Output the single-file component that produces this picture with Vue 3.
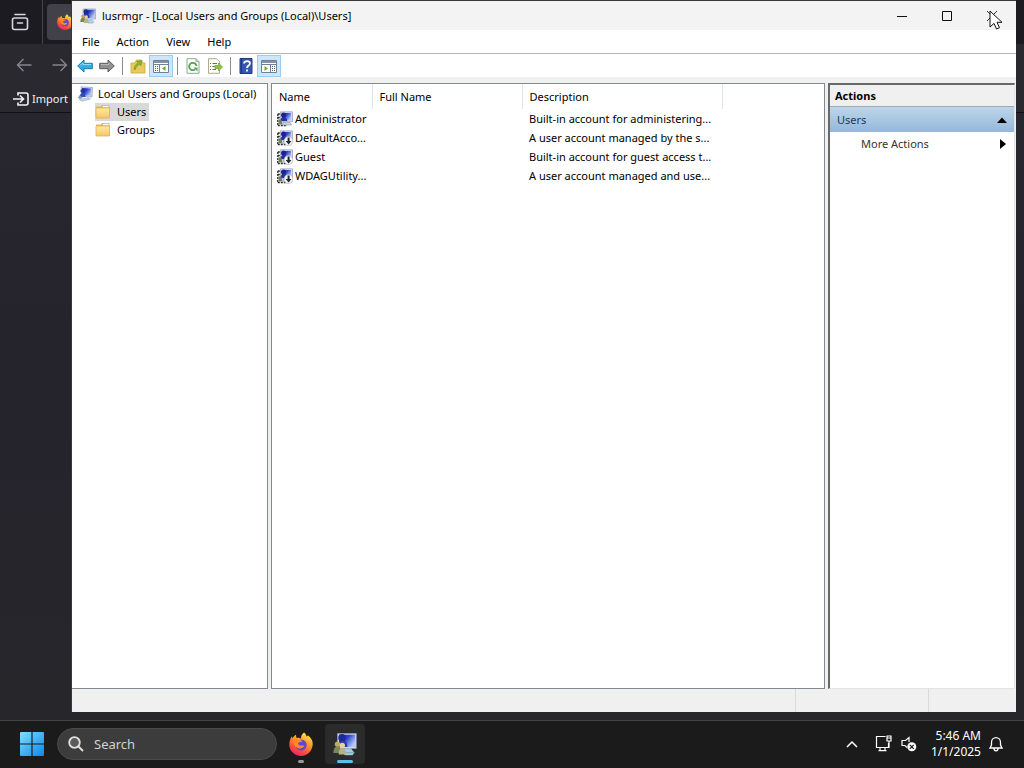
<script setup>
import { ref } from 'vue'

const menus = ['File', 'Action', 'View', 'Help']
const users = [
  { name: 'Administrator', full: '', description: 'Built-in account for administering...', disabled: false },
  { name: 'DefaultAcco...', full: '', description: 'A user account managed by the s...', disabled: true },
  { name: 'Guest', full: '', description: 'Built-in account for guest access t...', disabled: true },
  { name: 'WDAGUtility...', full: '', description: 'A user account managed and use...', disabled: true }
]
const folders = ['Users', 'Groups']
const selected = ref('Users')
const query = ref('')
</script>

<template>
  <svg class="defs" aria-hidden="true">
    <defs>
      <linearGradient id="screenFill" x1="0" y1="0" x2="1" y2="0.6">
        <stop offset="0" stop-color="#1020ae" /><stop offset="0.5" stop-color="#2d45c8" /><stop offset="1" stop-color="#b4c6f4" />
      </linearGradient>
      <linearGradient id="folderFill" x1="0" y1="0" x2="0" y2="1">
        <stop offset="0" stop-color="#ffe9a2" /><stop offset="1" stop-color="#f3c964" />
      </linearGradient>
      <linearGradient id="winFill" x1="0" y1="0" x2="1" y2="1">
        <stop offset="0" stop-color="#7fe0fb" /><stop offset="1" stop-color="#0a86ee" />
      </linearGradient>
      <linearGradient id="foxFill" x1="0.8" y1="0" x2="0.3" y2="1">
        <stop offset="0" stop-color="#fff04a" /><stop offset="0.4" stop-color="#ff9a28" /><stop offset="0.75" stop-color="#ff4a3c" /><stop offset="1" stop-color="#ec1f75" />
      </linearGradient>
      <symbol id="users" viewBox="0 0 16 16">
        <path d="M3 1h12.500v10H3z" fill="#d5d9e4" stroke="#8c94ac" stroke-width=".6" />
        <path d="M4 1.800h10.700v8.200H4z" fill="url(#screenFill)" />
        <path d="M7 11h5l2 2.500H6z" fill="#a9cbd8" />
        <path d="M6 13.500h8.500l-1.500 2H8z" fill="#9cc8d8" />
        <circle cx="6" cy="3.800" r="2.500" fill="#1e2899" />
        <path d="M3.500 10c0-3 1-4.300 2.800-4.300S9.500 7 9.500 10z" fill="#2437b7" />
        <circle cx="3" cy="8.200" r="1.800" fill="#bfa765" />
        <circle cx="6.200" cy="9" r="1.800" fill="#ead092" />
        <path d="M.3 14c0-3 1-4.300 2.600-4.300S5.500 11 5.500 14z" fill="#7c8652" />
        <path d="M3.800 15c0-3 1-4.300 2.500-4.300S8.700 12 8.700 15z" fill="#b5b486" />
      </symbol>
      <symbol id="root" viewBox="0 0 16 16">
        <path d="M4 .8l11.500.7-.5 9.500-10-.5z" fill="#d7ddec" stroke="#8591b4" stroke-width=".6" />
        <path d="M5 2l9.300.5-.4 7.300-8.200-.4z" fill="url(#screenFill)" />
        <circle cx="5.500" cy="5" r="2.100" fill="#2a329c" />
        <path d="M2.800 11c0-2.600 1-4 2.700-4s3 1.400 3 4z" fill="#2c4bc0" />
        <path d="M.8 12l2-3 3 2.500-2.500 1.500z" fill="#8b93a5" />
        <path d="M2 13.500l9-1.800 2.500 1.300-8.500 2.300z" fill="#bcd5e6" stroke="#8aa8be" stroke-width=".5" />
      </symbol>
      <symbol id="account" viewBox="0 0 16 16">
        <path d="M3.500.8h12v10h-12z" fill="#d5daf0" stroke="#858ca8" stroke-width=".6" />
        <path d="M5 2h9v7.300H5z" fill="url(#screenFill)" />
        <circle cx="6.500" cy="4" r="2.500" fill="#20218e" />
        <path d="M3.500 10c0-2.500 1.300-4 3.200-4s3.500 1.500 3.500 4z" fill="#2230a5" />
        <path d="M.8 3h2M.8 3v11.500M.8 6.500h2.700M.8 14.500H10" fill="none" stroke="#24272d" stroke-width="1.300" stroke-dasharray="2 1" />
        <path d="M1.500 8l3 1 1 4.500h-4z" fill="#72805e" />
        <path d="M6 11.500h7l1.500 2.500H5.500z" fill="#cad6dc" stroke="#8798a3" stroke-width=".6" />
      </symbol>
      <symbol id="folder" viewBox="0 0 16 16">
        <path d="M1 2.500h5l1-1.500h7.500v13H1z" fill="#e5b752" />
        <path d="M8 1.800h5.500v1.500H8z" fill="#fff" />
        <path d="M1 4h13.500v10H1z" fill="url(#folderFill)" stroke="#dcae4b" stroke-width=".7" />
      </symbol>
      <symbol id="firefox" viewBox="0 0 24 24">
        <path d="M15 .5c2 1.500 2.300 3 2.500 4 1-.3 1.300-.8 1.400-1.300C22.500 6 24 9 23.700 12.500 23.300 19 18.400 24 12 24S.3 18.800.3 12.500C.3 9 1.500 6 3 4.200c0 1 .2 1.600.5 2.100C4.500 4.500 6 3.200 7 2.700c-.2 1.500.3 2.500 1 3.300 1.800-.4 3.200.1 4 .8-.3-2.600 1-5 3-6.300z" fill="url(#foxFill)" />
        <circle cx="12.200" cy="13" r="5.500" fill="#6b45c9" />
        <path d="M3.700 8.800c2-1.600 4.500-1.700 6-.7 1.400-.2 2.900.2 3.600 1.400l-3.600 1c-.8.700-.7 1.700.1 2.500 1.900 1.200 3.800.2 5.500.7-1.300 2.600-4.500 3.500-7.200 2C5.500 14.200 4.800 11.500 3.700 8.800z" fill="#ff8b22" />
      </symbol>
    </defs>
  </svg>

  <div class="screen">
    <main class="desktop">
      <section class="browser" aria-label="Browser">
        <div class="tabs">
          <button class="recent" aria-label="Recent browsing">
            <svg width="18" height="18" viewBox="0 0 18 18" fill="none" stroke="#d8d7df" stroke-width="1.600" stroke-linecap="round"><path d="M4 1.500h10M3.500 5h11q2 0 2 2v7.500q0 2-2 2h-11q-2 0-2-2V7q0-2 2-2zM6.500 10h5" /></svg>
          </button>
          <div class="tab"><svg width="16" height="16"><use href="#firefox" /></svg></div>
        </div>
        <div class="nav">
          <button aria-label="Back"><svg width="16" height="16" viewBox="0 0 16 16" fill="none" stroke="#85848d" stroke-width="1.400"><path d="M15.500 8H1.500M7.500 2l-6 6 6 6" /></svg></button>
          <button aria-label="Forward"><svg width="16" height="16" viewBox="0 0 16 16" fill="none" stroke="#85848d" stroke-width="1.400"><path d="M.5 8h14M8.500 2l6 6-6 6" /></svg></button>
        </div>
        <div class="bookmarks">
          <button class="import"><svg width="16" height="14" viewBox="0 0 16 14" fill="none" stroke="#f2f2f5" stroke-width="1.600"><path d="M0 7h10M7 3.500L10.500 7 7 10.500M5 3.500V1h8q2 0 2 2v8q0 2-2 2H5v-2.500" /></svg>Import</button>
        </div>
      </section>

      <section class="window" aria-label="lusrmgr">
        <header class="title">
          <svg width="16" height="16"><use href="#users" /></svg>
          <h1>lusrmgr - [Local Users and Groups (Local)\Users]</h1>
          <div class="controls">
            <button aria-label="Minimize"><svg width="12" height="12" viewBox="0 0 12 12"><path d="M1 6.500h10" stroke="#111" /></svg></button>
            <button aria-label="Maximize"><svg width="12" height="12" viewBox="0 0 12 12"><path d="M1.500 1.500h9v9h-9z" stroke="#111" fill="none" /></svg></button>
            <button aria-label="Close"><svg width="12" height="12" viewBox="0 0 12 12"><path d="M1 1l10 10M11 1L1 11" stroke="#333" /></svg></button>
          </div>
        </header>

        <nav class="menu"><button v-for="m in menus" :key="m">{{ m }}</button></nav>

        <div class="tools" role="toolbar" aria-label="Tools">
          <button aria-label="Back"><svg width="16" height="16" viewBox="0 0 16 16"><path d="M.7 8L7 2v3.300h8.300v5.400H7V14z" fill="#35aee6" stroke="#197cad" /><path d="M3 7.500L6 5v1.500h8" stroke="#97dcf7" fill="none" /></svg></button>
          <button aria-label="Forward"><svg width="16" height="16" viewBox="0 0 16 16"><path d="M15.300 8L9 2v3.300H.7v5.400H9V14z" fill="#929292" stroke="#5c5c5c" /><path d="M2 6.500h8V5" stroke="#bbb" fill="none" /></svg></button>
          <i class="bar"></i>
          <button aria-label="Up one level"><svg width="16" height="16" viewBox="0 0 16 16"><path d="M1 5h4l1.500-3h5l1 3H15v10H1z" fill="#ebca5d" stroke="#c8a740" stroke-width=".8" /><path d="M4 11.500C4 8.500 5.500 6.500 8 5L6.500 3.500 12 2.500l-1 5.200L9.500 6.300C7.500 7.500 6 9 5.500 11.500z" fill="#86b52c" stroke="#628c1c" stroke-width=".5" /></svg></button>
          <button class="on" aria-label="Show or hide console tree"><svg width="18" height="16" viewBox="0 0 18 16"><path d="M1.500 2.500h15v12h-15z" fill="#fff" stroke="#718195" /><path d="M2 3h14v2H2z" fill="#8293aa" /><path d="M2 6.500h14M7.500 7v7" stroke="#718195" /><path d="M3 8.500h3M3 10.500h3M3 12.500h3" stroke="#45536a" stroke-dasharray="1 1" /><path d="M13.500 8v5L10 10.500z" fill="#72a837" /></svg></button>
          <i class="bar"></i>
          <button aria-label="Refresh"><svg width="16" height="16" viewBox="0 0 16 16"><path d="M2 .7h9l3 3v11.600H2z" fill="#fff" stroke="#98a29b" /><path d="M11 .7v3h3" fill="none" stroke="#98a29b" /><path d="M11.500 8A3.700 3.700 0 1 0 10 11.500" fill="none" stroke="#50a648" stroke-width="1.800" /><path d="M8.500 9.500h4v4z" fill="#50a648" /></svg></button>
          <button aria-label="Export list"><svg width="16" height="16" viewBox="0 0 16 16"><path d="M1.500.7h8l3 3v11.600h-11z" fill="#fffef4" stroke="#aca994" /><path d="M3 5.500h1M5.500 5.500H10M3 8.500h1M5.500 8.500H8M3 11.500h1M5.500 11.500H9" stroke="#69705f" /><path d="M8 7.500h3.500V5L15.500 9l-4 4v-2.500H8z" fill="#8bc63c" stroke="#659c29" stroke-width=".6" /></svg></button>
          <i class="bar"></i>
          <button aria-label="Help"><svg width="16" height="16" viewBox="0 0 16 16"><path d="M2 .5h12v15H2z" fill="#3556b2" stroke="#233b7c" /><path d="M3.500 1v14" stroke="#203780" /><path d="M6 5.500C6 2.200 12 2.200 12 5.500 12 7.500 9 7.500 9 10M9 11.500v2" fill="none" stroke="#fff" stroke-width="1.800" /></svg></button>
          <button class="on" aria-label="Show or hide action pane"><svg width="18" height="16" viewBox="0 0 18 16"><path d="M1.500 2.500h15v12h-15z" fill="#fff" stroke="#718195" /><path d="M2 3h14v2H2z" fill="#8293aa" /><path d="M2 6.500h14M10.500 7v7" stroke="#718195" /><path d="M12 8.500h3M12 10.500h3M12 12.500h3" stroke="#45536a" stroke-dasharray="1 1" /><path d="M4.500 8v5L8 10.500z" fill="#72a837" /></svg></button>
        </div>

        <div class="panes">
          <aside class="pane tree">
            <div class="node rootnode"><svg width="16" height="16"><use href="#root" /></svg><span>Local Users and Groups (Local)</span></div>
            <button v-for="f in folders" :key="f" class="node leaf" :class="{ chosen: selected === f }" @click="selected = f">
              <svg width="16" height="16"><use href="#folder" /></svg><span>{{ f }}</span>
            </button>
          </aside>

          <div class="pane list">
            <table>
              <thead><tr><th class="c1">Name</th><th class="c2">Full Name</th><th class="c3">Description</th></tr></thead>
              <tbody>
                <tr v-for="u in users" :key="u.name">
                  <td class="who">
                    <div><svg width="16" height="16" viewBox="0 0 16 16"><use href="#account" width="16" height="16" /><g v-if="u.disabled"><circle cx="11.500" cy="11" r="4.500" fill="#f5f7f9" stroke="#8c939d" stroke-width=".5" /><path d="M10.600 7.500h2v3.500h1.900l-2.900 3.500L8.700 11h1.900z" fill="#20262a" /></g></svg>{{ u.name }}</div>
                  </td>
                  <td>{{ u.full }}</td>
                  <td>{{ u.description }}</td>
                </tr>
              </tbody>
            </table>
          </div>

          <aside class="actions">
            <h2>Actions</h2>
            <button class="group">Users<svg width="10" height="6" viewBox="0 0 10 6"><path d="M0 6l5-5.500L10 6z" /></svg></button>
            <button class="more">More Actions<svg width="6" height="10" viewBox="0 0 6 10"><path d="M0 0l6 5-6 5z" /></svg></button>
          </aside>
        </div>
        <footer class="status"><span></span><span></span><span></span></footer>
      </section>

      <svg class="cursor" width="14" height="22" viewBox="0 0 14 22"><path d="M1 1v16l4-3.600L7.500 19l3-1.300L8 12.300h5z" fill="#fff" stroke="#111" /></svg>
    </main>

    <footer class="taskbar">
      <button class="start" aria-label="Start"><svg width="24" height="24" viewBox="0 0 24 24" fill="url(#winFill)"><path d="M0 1q0-1 1-1h10.400v11.400H0zM12.600 0H23q1 0 1 1v10.400H12.600zM0 12.600h11.400V24H1q-1 0-1-1zM12.600 12.600H24V23q0 1-1 1H12.600z" /></svg></button>
      <label class="search">
        <svg width="16" height="16" viewBox="0 0 16 16" fill="none" stroke="#e2e2e2" stroke-width="1.800"><circle cx="6.500" cy="6.500" r="5.300" fill="#5b5b5b" /><path d="M10.500 10.500L15 15" /></svg>
        <input v-model="query" type="text" placeholder="Search" aria-label="Search" />
      </label>
      <button class="app" aria-label="Firefox"><svg width="24" height="24"><use href="#firefox" /></svg><i></i></button>
      <button class="app active" aria-label="Local Users and Groups"><svg width="24" height="24"><use href="#users" /></svg><i></i></button>
      <div class="tray">
        <button aria-label="Show hidden icons"><svg width="12" height="8" viewBox="0 0 12 8" fill="none" stroke="#fff" stroke-width="1.500"><path d="M1 7l5-5 5 5" /></svg></button>
        <button class="net" aria-label="Network"><svg width="17" height="17" viewBox="0 0 17 17" fill="none" stroke="#fff" stroke-width="1.200"><path d="M10.500 1.500h-9v11h12V8M5 12.500v3M10 12.500v3M3.500 15.700h8M12 1h4v5h-4zM14 6v7M12 3h4" /></svg></button>
        <button class="vol" aria-label="Volume"><svg width="16" height="16" viewBox="0 0 16 16"><path d="M8 6V1.500L4.500 4.500H1v5h3l2 2" fill="none" stroke="#fff" stroke-width="1.200" /><circle cx="10.800" cy="10.800" r="4.500" fill="#fff" /><path d="M8.800 8.800l4 4M12.800 8.800l-4 4" stroke="#1b1b1b" stroke-width="1.200" /></svg></button>
        <button class="clock"><span>5:46 AM</span><span>1/1/2025</span></button>
        <button class="bell" aria-label="Notifications"><svg width="14" height="16" viewBox="0 0 14 16" fill="none" stroke="#fff" stroke-width="1.300"><path d="M1 12l1.500-3V6.200a4.500 4.500 0 0 1 9 0V9L13 12zM5 12.500q0 2.300 2 2.300t2-2.300" /></svg></button>
      </div>
    </footer>
  </div>
</template>

<style>
body { margin: 0; background: #1c1c1c; }
</style>

<style scoped>
* { box-sizing: border-box; }
.defs { position: absolute; width: 0; height: 0; }
button { font: inherit; color: inherit; background: none; border: 0; padding: 0; display: flex; align-items: center; }
svg { flex: none; display: block; }
.screen { display: flex; flex-direction: column; min-height: 100vh; font: 11px/18px "Noto Sans", "Open Sans", sans-serif; color: #000; }
.desktop { position: relative; flex: 1; display: flex; background: #2b2a33; }

.browser { flex: 1; background: linear-gradient(#29282f, #25242d 50%, #27262b); color: #f2f2f5; }
.tabs { height: 44px; display: flex; align-items: center; background: #1c1b21; }
.recent { width: 43px; height: 44px; padding-left: 11px; border-right: 1px solid #45444c; }
.tab { width: 200px; height: 36px; margin-left: 4px; padding-left: 10px; display: flex; align-items: center; background: #42414a; border-radius: 4px; }
.nav { height: 41px; display: flex; gap: 20px; padding-left: 16px; background: #2a2930; }
.bookmarks { height: 28px; display: flex; align-items: center; padding-left: 13px; background: #2a2930; border-bottom: 1px solid #111015; }
.import { gap: 3px; }

.window { position: absolute; inset: 0 8px 8px 71px; display: flex; flex-direction: column; border: 1px solid #38383c; border-bottom: 0; border-right: 0; background: #f0f0f0; }
.title { height: 29px; display: flex; align-items: center; padding: 0 2px 0 8px; background: #f3f3f3; }
.title h1 { margin: 0 0 0 6px; font: inherit; flex: 1; }
.controls { display: flex; }
.controls button { width: 45px; height: 28px; justify-content: center; }
.menu { height: 24px; display: flex; gap: 17px; padding-left: 10px; background: #fff; border-bottom: 1px solid #b4b4b4; }
.tools { height: 23px; display: flex; align-items: center; padding-left: 2px; background: #fff; }
.tools button { width: 22px; height: 22px; justify-content: center; }
.tools .on { width: 24px; background: #cde6fa; border: 1px solid #9acbf2; }
.bar { width: 1px; height: 18px; margin: 0 4px; background: #8c8c8c; }

.panes { flex: 1; display: flex; gap: 3px; padding: 6px 1px 0 0; }
.pane { background: #fff; border: 1px solid #828790; }
.tree { width: 196px; padding-top: 1px; white-space: nowrap; border-left: 0; }
.node { height: 18px; display: flex; align-items: center; }
.rootnode { padding-left: 5px; gap: 5px; }
.leaf { margin-left: 23px; padding-right: 3px; gap: 6px; }
.chosen { background: #d9d9d9; }
.list { flex: 1; }
table { border-collapse: collapse; table-layout: fixed; width: 450px; }
th, td { padding: 0 0 0 7px; font-weight: 400; text-align: left; white-space: nowrap; }
th { height: 25px; border-right: 1px solid #e5e5e5; }
td { height: 19px; }
.c1 { width: 100px; }
.c2 { width: 150px; }
.c3 { width: 200px; }
.who { padding-left: 5px; }
.who div { display: flex; align-items: center; gap: 2px; }

.actions { width: 187px; background: #fff; border: 1px solid #e3e3e3; border-top: 2px solid #696969; border-left: 2px solid #696969; }
.actions h2 { height: 22px; margin: 0; padding-left: 5px; font: bold 11px/22px "Noto Sans", sans-serif; background: #f0f0f0; border-bottom: 1px solid #a0a8b0; }
.group, .more { width: 100%; justify-content: space-between; }
.group { height: 25px; padding: 0 7px; color: #1e395b; background: linear-gradient(#bdd5ea, #94b8d9); }
.more { height: 24px; padding: 0 8px 0 31px; color: #333; }
.group svg, .more svg { fill: #000; }
.status { height: 23px; display: flex; }
.status span { width: 88px; border-left: 1px solid #dadada; }
.status span:first-child { flex: 1; border: 0; }
.status span:nth-child(2) { width: 133px; }
.cursor { position: absolute; top: 10px; right: 21px; }

.taskbar { height: 48px; display: flex; align-items: center; padding: 0 12px 2px 20px; background: #1b1b1b; border-top: 1px solid #434343; color: #fff; }
.search { width: 220px; height: 32px; margin: 0 4px 0 13px; padding: 0 10px; display: flex; align-items: center; gap: 10px; border-radius: 16px; background: #3c3c3c; border: 1px solid #4a4a4a; }
.search input { flex: 1; min-width: 0; padding: 0; border: 0; outline: 0; background: none; color: #fff; font: 13px/20px "Noto Sans", sans-serif; }
.search input::placeholder { color: #d2d2d2; opacity: 1; }
.app { position: relative; width: 40px; height: 40px; justify-content: center; border-radius: 4px; }
.app + .app { margin-left: 4px; }
.app i { position: absolute; bottom: 1px; width: 6px; height: 3px; border-radius: 2px; background: #9a9a9a; }
.app.active { background: #2b2b2b; }
.app.active i { width: 16px; background: #5bc0e8; }
.tray { margin-left: auto; display: flex; align-items: center; }
.net { margin-left: 17px; }
.vol { margin-left: 9px; }
.clock { width: 64px; flex-direction: column; align-items: flex-end; font-size: 12px; line-height: 16px; }
.bell { margin: 0 9px 0 8px; }
</style>
